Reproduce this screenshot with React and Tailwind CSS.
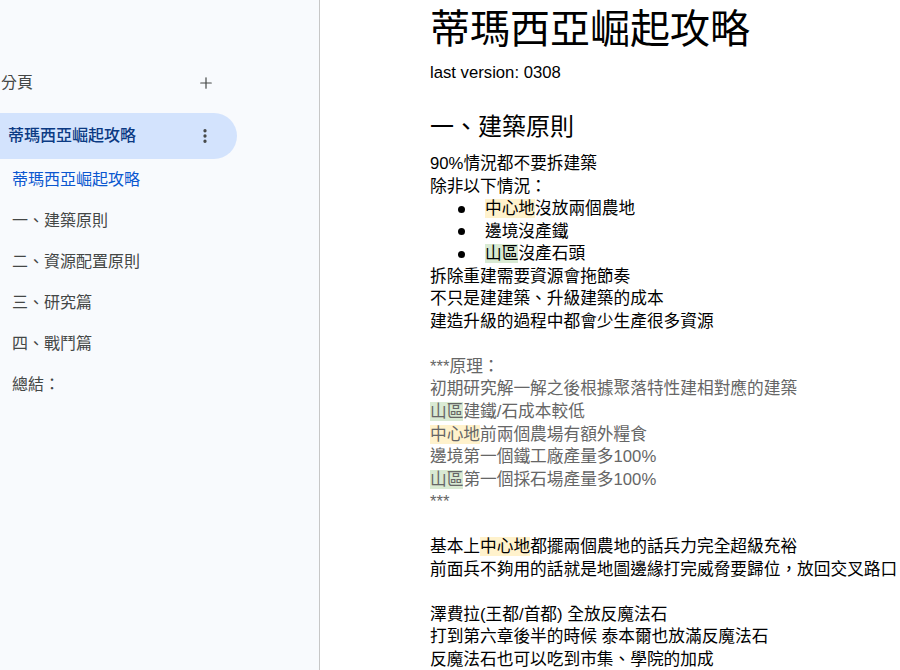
import { Plus, EllipsisVertical } from "lucide-react";

const cjk = "font-['Liberation_Sans','Noto_Sans_CJK_TC',sans-serif]";

function Yellow({ children }) {
  return <span className="bg-[#fff2cc]">{children}</span>;
}

function Green({ children }) {
  return <span className="bg-[#d9ead3]">{children}</span>;
}

function Bullet({ children }) {
  return (
    <div className="flex items-center pl-[28px]">
      <span className="w-[7px] h-[7px] rounded-full bg-black mr-[20px]" />
      <span>{children}</span>
    </div>
  );
}

export default function App() {
  const outline = ["一、建築原則", "二、資源配置原則", "三、研究篇", "四、戰鬥篇", "總結："];

  return (
    <div className="flex h-screen w-full overflow-hidden bg-white">
      {/* Sidebar (tabs + outline) */}
      <aside className="w-[320px] shrink-0 h-full bg-[#f8fafd] border-r border-[#c7c7c7] font-['Roboto','Noto_Sans_CJK_TC',sans-serif]">
        <div className="mt-[70px] h-[26px] flex items-center justify-between pr-[104px]">
          <span className="pl-[1px] text-[16px] text-[#444746]">分頁</span>
          <Plus size={18} strokeWidth={1.6} className="text-[#444746]" />
        </div>

        <div className="mt-[17px] w-[237px] h-[46px] rounded-r-full bg-[#d3e3fd] flex items-center justify-between pl-[8px] pr-[23px]">
          <span className="text-[16px] font-medium text-[#0b3a83]">蒂瑪西亞崛起攻略</span>
          <EllipsisVertical size={18} strokeWidth={2.4} className="text-[#444746]" />
        </div>

        <div className="pl-[12px] flex flex-col">
          <div className="h-[41px] flex items-center text-[16px] text-[#0b57d0]">蒂瑪西亞崛起攻略</div>
          {outline.map((item) => (
            <div key={item} className="h-[41px] flex items-center text-[16px] text-[#444746]">
              {item}
            </div>
          ))}
        </div>
      </aside>

      {/* Document body */}
      <main className={`flex-1 pl-[110px] text-black ${cjk}`}>
        <h1 className="mt-[6px] text-[40px] leading-[46px]">蒂瑪西亞崛起攻略</h1>
        <div className="mt-[10px] text-[16.7px] leading-[22px]">last version: 0308</div>
        <h2 className="mt-[28px] text-[24px] leading-[30px]">一、建築原則</h2>

        <div className="mt-[11px] text-[16.7px] leading-[22.55px]">
          <div>90%情況都不要拆建築</div>
          <div>除非以下情況：</div>
          <Bullet>
            <Yellow>中心地</Yellow>沒放兩個農地
          </Bullet>
          <Bullet>邊境沒產鐵</Bullet>
          <Bullet>
            <Green>山區</Green>沒產石頭
          </Bullet>
          <div>拆除重建需要資源會拖節奏</div>
          <div>不只是建建築、升級建築的成本</div>
          <div>建造升級的過程中都會少生產很多資源</div>
          <div className="h-[22.55px]" />

          <div className="text-[#666666]">
            <div>***原理：</div>
            <div className="whitespace-nowrap">初期研究解一解之後根據聚落特性建相對應的建築</div>
            <div>
              <Green>山區</Green>建鐵/石成本較低
            </div>
            <div>
              <Yellow>中心地</Yellow>前兩個農場有額外糧食
            </div>
            <div>邊境第一個鐵工廠產量多100%</div>
            <div>
              <Green>山區</Green>第一個採石場產量多100%
            </div>
            <div>***</div>
          </div>
          <div className="h-[22.55px]" />

          <div>
            基本上<Yellow>中心地</Yellow>都擺兩個農地的話兵力完全超級充裕
          </div>
          <div className="whitespace-nowrap">前面兵不夠用的話就是地圖邊緣打完威脅要歸位，放回交叉路口</div>
          <div className="h-[22.55px]" />
          <div>澤費拉(王都/首都) 全放反魔法石</div>
          <div>打到第六章後半的時候 泰本爾也放滿反魔法石</div>
          <div>反魔法石也可以吃到市集、學院的加成</div>
        </div>
      </main>
    </div>
  );
}
